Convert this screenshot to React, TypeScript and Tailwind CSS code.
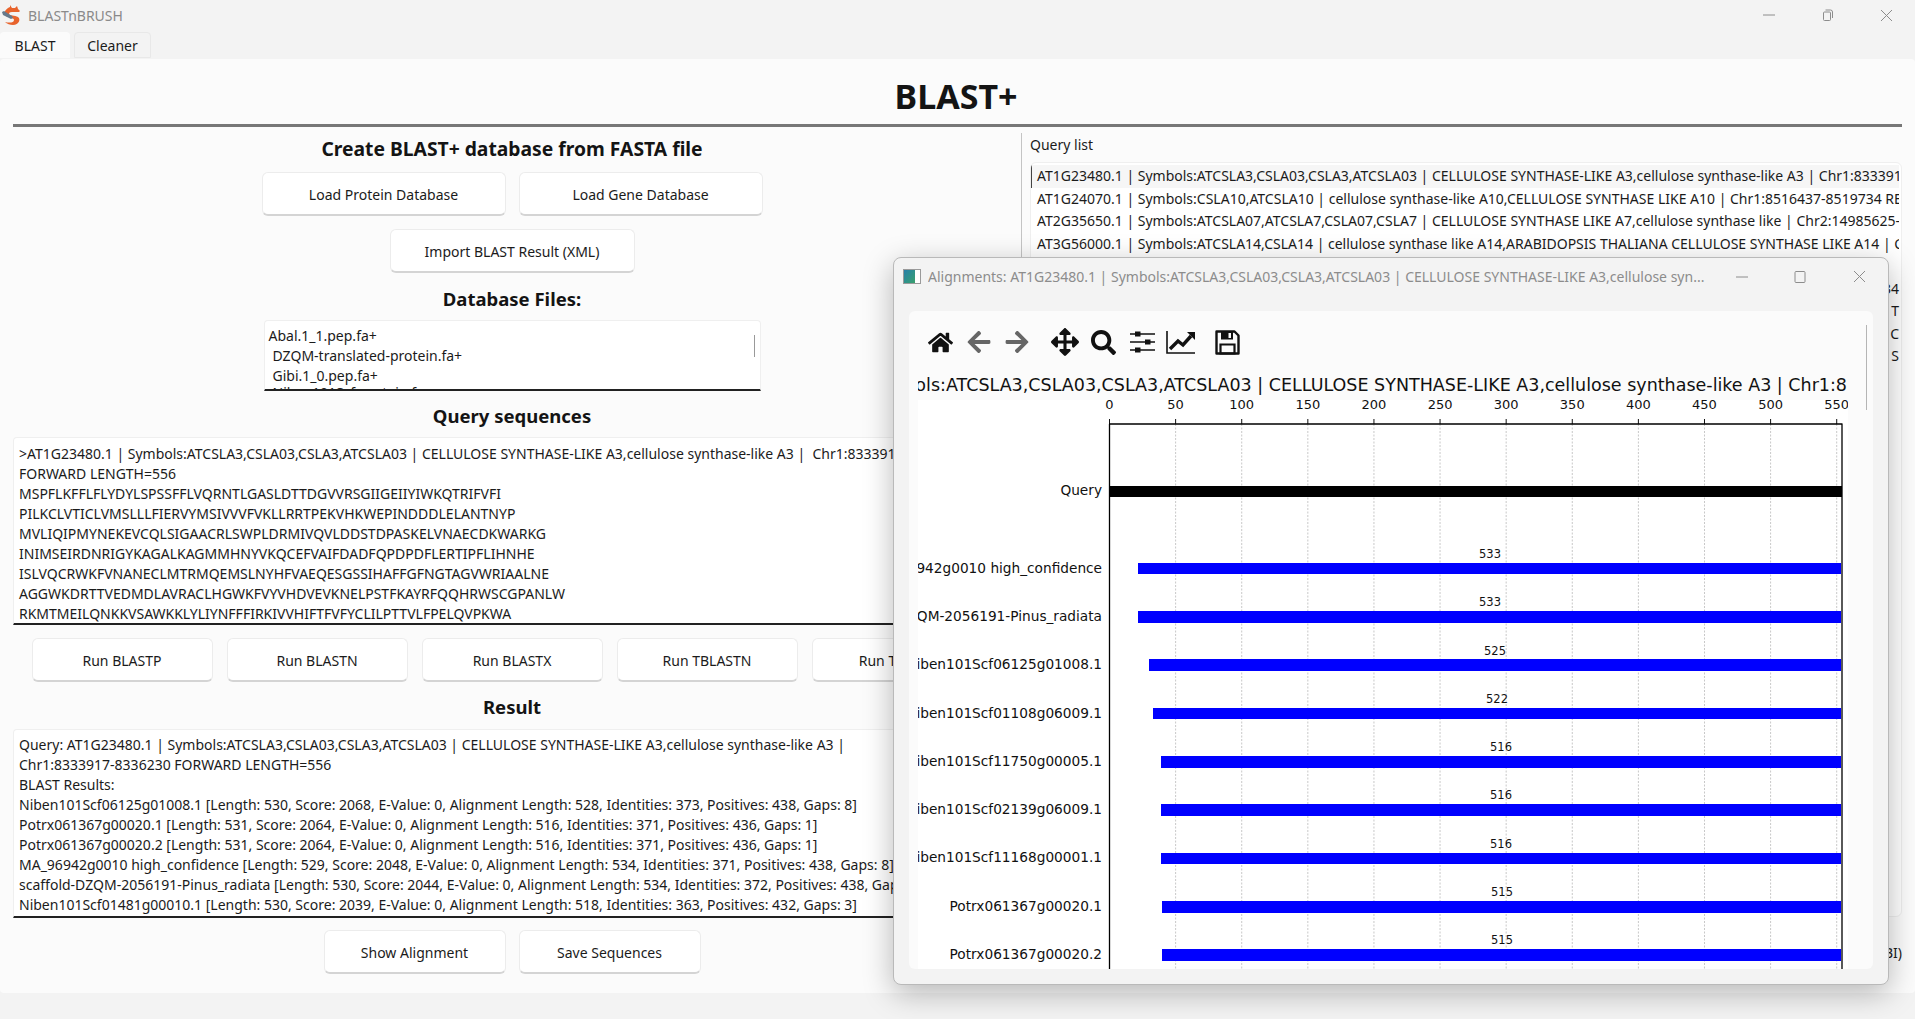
import React from 'react'
import { FaHome, FaArrowLeft, FaArrowRight, FaArrowsAlt, FaSearch } from 'react-icons/fa'

const queryLines = [
  '>AT1G23480.1 | Symbols:ATCSLA3,CSLA03,CSLA3,ATCSLA03 | CELLULOSE SYNTHASE-LIKE A3,cellulose synthase-like A3 |  Chr1:8333917-8336230',
  'FORWARD LENGTH=556',
  'MSPFLKFFLFLYDYLSPSSFFLVQRNTLGASLDTTDGVVRSGIIGEIIYIWKQTRIFVFI',
  'PILKCLVTICLVMSLLLFIERVYMSIVVVFVKLLRRTPEKVHKWEPINDDDLELANTNYP',
  'MVLIQIPMYNEKEVCQLSIGAACRLSWPLDRMIVQVLDDSTDPASKELVNAECDKWARKG',
  'INIMSEIRDNRIGYKAGALKAGMMHNYVKQCEFVAIFDADFQPDPDFLERTIPFLIHNHE',
  'ISLVQCRWKFVNANECLMTRMQEMSLNYHFVAEQESGSSIHAFFGFNGTAGVWRIAALNE',
  'AGGWKDRTTVEDMDLAVRACLHGWKFVYVHDVEVKNELPSTFKAYRFQQHRWSCGPANLW',
  'RKMTMEILQNKKVSAWKKLYLIYNFFFIRKIVVHIFTFVFYCLILPTTVLFPELQVPKWA',
]

const resultLines = [
  'Query: AT1G23480.1 | Symbols:ATCSLA3,CSLA03,CSLA3,ATCSLA03 | CELLULOSE SYNTHASE-LIKE A3,cellulose synthase-like A3 |',
  'Chr1:8333917-8336230 FORWARD LENGTH=556',
  'BLAST Results:',
  'Niben101Scf06125g01008.1 [Length: 530, Score: 2068, E-Value: 0, Alignment Length: 528, Identities: 373, Positives: 438, Gaps: 8]',
  'Potrx061367g00020.1 [Length: 531, Score: 2064, E-Value: 0, Alignment Length: 516, Identities: 371, Positives: 436, Gaps: 1]',
  'Potrx061367g00020.2 [Length: 531, Score: 2064, E-Value: 0, Alignment Length: 516, Identities: 371, Positives: 436, Gaps: 1]',
  'MA_96942g0010 high_confidence [Length: 529, Score: 2048, E-Value: 0, Alignment Length: 534, Identities: 371, Positives: 438, Gaps: 8]',
  'scaffold-DZQM-2056191-Pinus_radiata [Length: 530, Score: 2044, E-Value: 0, Alignment Length: 534, Identities: 372, Positives: 438, Gaps: 8]',
  'Niben101Scf01481g00010.1 [Length: 530, Score: 2039, E-Value: 0, Alignment Length: 518, Identities: 363, Positives: 432, Gaps: 3]',
]

const queryList = [
  'AT1G23480.1 | Symbols:ATCSLA3,CSLA03,CSLA3,ATCSLA03 | CELLULOSE SYNTHASE-LIKE A3,cellulose synthase-like A3 | Chr1:8333917-8336230 FORWARD LENGTH=556',
  'AT1G24070.1 | Symbols:CSLA10,ATCSLA10 | cellulose synthase-like A10,CELLULOSE SYNTHASE LIKE A10 | Chr1:8516437-8519734 REVERSE LENGTH=536',
  'AT2G35650.1 | Symbols:ATCSLA07,ATCSLA7,CSLA07,CSLA7 | CELLULOSE SYNTHASE LIKE A7,cellulose synthase like | Chr2:14985625-14988000 FORWARD',
  'AT3G56000.1 | Symbols:ATCSLA14,CSLA14 | cellulose synthase like A14,ARABIDOPSIS THALIANA CELLULOSE SYNTHASE LIKE A14 | Chr3:20782000',
]

const ticks = [0, 50, 100, 150, 200, 250, 300, 350, 400, 450, 500, 550]
const bars = [
  { label: 'MA_96942g0010 high_confidence', value: 533, x: 1138, y: 563, h: 11, labelY: 568, textX: 1490, textY: 554 },
  { label: 'scaffold-DZQM-2056191-Pinus_radiata', value: 533, x: 1138, y: 611, h: 12, labelY: 616, textX: 1490, textY: 602 },
  { label: 'Niben101Scf06125g01008.1', value: 525, x: 1149, y: 659, h: 12, labelY: 664, textX: 1495, textY: 651 },
  { label: 'Niben101Scf01108g06009.1', value: 522, x: 1153, y: 708, h: 11, labelY: 713, textX: 1497, textY: 699 },
  { label: 'Niben101Scf11750g00005.1', value: 516, x: 1161, y: 756, h: 12, labelY: 761, textX: 1501, textY: 747 },
  { label: 'Niben101Scf02139g06009.1', value: 516, x: 1161, y: 804, h: 12, labelY: 809, textX: 1501, textY: 795 },
  { label: 'Niben101Scf11168g00001.1', value: 516, x: 1161, y: 853, h: 11, labelY: 857, textX: 1501, textY: 844 },
  { label: 'Potrx061367g00020.1', value: 515, x: 1162, y: 901, h: 12, labelY: 906, textX: 1502, textY: 892 },
  { label: 'Potrx061367g00020.2', value: 515, x: 1162, y: 949, h: 12, labelY: 954, textX: 1502, textY: 940 },
]

function Button({ children, className }: { children: React.ReactNode; className?: string }) {
  return (
    <button className={`h-[44px] shrink-0 rounded-md border border-[#ececec] border-b-2 border-b-[#d4d4d4] bg-white pt-[2px] text-[14px] text-[#1b1b1b] ${className ?? ''}`}>
      {children}
    </button>
  )
}

function Heading({ children, className }: { children: React.ReactNode; className?: string }) {
  return <h2 className={`h-[24px] text-center leading-[24px] font-bold text-[#141414] ${className ?? 'text-[18.5px]'}`}>{children}</h2>
}

function Logo() {
  return (
    <svg width="21" height="21" viewBox="0 0 21 21" className="shrink-0">
      <path d="M8 0l2 3 3 0 2-2 1 3 2 2-1 1-5 0c-3 0-5 0-5 2s6 1 9 3 1 8-5 8c-3 0-6-1-8-3 4 1 9 1 9-2s-7-2-9-5 2-7 5-8z" fill="#e8632c" />
      <path d="M0 7l2-1 8 5 1 2-2 1-8-4z" fill="#66788a" />
    </svg>
  )
}

function WindowButtons() {
  return (
    <div className="flex items-center">
      <svg width="12" height="12" viewBox="0 0 12 12" className="mr-[47px]"><path d="M0 6h12" stroke="#8c8c8c" /></svg>
      <svg width="12" height="12" viewBox="0 0 12 12" className="mr-[46px]">
        <rect x="1.5" y="3" width="7" height="8.5" rx="1" fill="none" stroke="#8c8c8c" />
        <path d="M3.5 1h5a2 2 0 0 1 2 2v6" fill="none" stroke="#8c8c8c" />
      </svg>
      <svg width="13" height="13" viewBox="0 0 13 13"><path d="M1 1l11 11M12 1L1 12" stroke="#8c8c8c" /></svg>
    </div>
  )
}

function SlidersIcon() {
  return (
    <svg width="25" height="24" viewBox="0 0 25 24">
      <path d="M0 4h25M0 12h25M0 20h25" stroke="#111" strokeWidth="1.6" />
      <rect x="5" y="1.5" width="5.5" height="5" fill="#111" />
      <rect x="15" y="9.5" width="5.5" height="5" fill="#111" />
      <rect x="5" y="17.5" width="5.5" height="5" fill="#111" />
    </svg>
  )
}

function ChartIcon() {
  return (
    <svg width="30" height="24" viewBox="0 0 30 24">
      <path d="M1 1v22h28" fill="none" stroke="#111" strokeWidth="1.6" />
      <path d="M4 19l8-8 5 4 8-9" fill="none" stroke="#111" strokeWidth="3.4" />
      <path d="M21 2h8v8z" fill="#111" />
    </svg>
  )
}

function SaveIcon() {
  return (
    <svg width="25" height="25" viewBox="0 0 25 25">
      <path d="M1.5 1.5h18l4 4v18h-22z" fill="none" stroke="#111" strokeWidth="2.4" strokeLinejoin="round" />
      <path d="M6 1.5h12v8H6z" fill="#111" />
      <path d="M13.5 3h2.5v5h-2.5z" fill="#fbfbfb" />
      <path d="M5.5 14.5h14v9h-14z" fill="none" stroke="#111" strokeWidth="2.2" />
    </svg>
  )
}

function AlignmentPlot() {
  return (
    <svg width="930" height="598" viewBox="918 371 930 598" className="block shrink-0 bg-white" style={{ fontFamily: '"DejaVu Sans", sans-serif' }}>
      <rect x="918" y="371" width="930" height="29" fill="#fbfbfb" />
      <text x="1847" y="391" textAnchor="end" fontSize="17.5" fill="#111">
        Symbols:ATCSLA3,CSLA03,CSLA3,ATCSLA03 | CELLULOSE SYNTHASE-LIKE A3,cellulose synthase-like A3 | Chr1:8
      </text>
      {ticks.map((t) => {
        const x = 1109.5 + t * 1.3222
        return (
          <g key={t}>
            <path d={`M${x} 424V969`} stroke="#c8c8c8" strokeWidth="1" strokeDasharray="2 1.5" />
            <path d={`M${x} 419V424`} stroke="#111" strokeWidth="1" />
            <text x={x} y="409" textAnchor="middle" fontSize="13" fill="#111">{t}</text>
          </g>
        )
      })}
      <rect x="1109" y="486" width="733" height="11" fill="#000" />
      <text x="1102" y="495" textAnchor="end" fontSize="13.7" fill="#111">Query</text>
      {bars.map((b) => (
        <g key={b.label}>
          <rect x={b.x} y={b.y} width={1841 - b.x} height={b.h} fill="#0000ff" />
          <text x="1102" y={b.labelY + 5} textAnchor="end" fontSize="13.7" fill="#111">{b.label}</text>
          <text x={b.textX} y={b.textY + 4} textAnchor="middle" fontSize="11.5" fill="#111">{b.value}</text>
        </g>
      ))}
      <path d="M1109.5 424V969M1842 424V969M1109 424H1842.5" fill="none" stroke="#000" strokeWidth="1.3" />
    </svg>
  )
}

function AlignmentWindow() {
  return (
    <div className="absolute top-[257px] left-[893px] flex h-[728px] w-[996px] flex-col rounded-lg border border-[#b9b9b9] bg-[#f3f3f3] shadow-[0_8px_30px_rgba(0,0,0,0.28)]">
      <div className="flex h-[53px] shrink-0 items-center pr-[9px] pb-[16px] pl-[9px] text-[14px] text-[#8c8c8c]">
        <div className="mr-[7px] flex h-[15px] w-[18px] shrink-0 border border-[#9a9a9a] bg-white">
          <div className="w-[11px] bg-gradient-to-br from-[#2a7fa8] to-[#3aa06a]" />
        </div>
        <span className="w-[786px] overflow-hidden whitespace-nowrap">
          Alignments: AT1G23480.1 | Symbols:ATCSLA3,CSLA03,CSLA3,ATCSLA03 | CELLULOSE SYNTHASE-LIKE A3,cellulose syn...
        </span>
        <svg width="12" height="12" viewBox="0 0 12 12" className="mr-[46px] ml-[22px] shrink-0"><path d="M0 6h12" stroke="#8c8c8c" /></svg>
        <svg width="12" height="12" viewBox="0 0 12 12" className="mr-[47px] shrink-0"><rect x="1" y="0.5" width="10" height="11" rx="1" fill="none" stroke="#8c8c8c" /></svg>
        <svg width="13" height="13" viewBox="0 0 13 13" className="shrink-0"><path d="M1 1l11 11M12 1L1 12" stroke="#8c8c8c" /></svg>
      </div>
      <div className="mx-[15px] flex h-[658px] flex-col rounded-md bg-[#fbfbfb] pl-[9px]">
        <div className="relative flex h-[60px] shrink-0 items-center pt-[2px] pl-[10px] text-[#111]">
          <FaHome size={25} />
          <FaArrowLeft size={26} className="ml-[13px] text-[#666]" />
          <FaArrowRight size={26} className="ml-[12px] text-[#666]" />
          <FaArrowsAlt size={28} className="ml-[21px]" />
          <FaSearch size={25} className="ml-[12px]" />
          <div className="ml-[14px]"><SlidersIcon /></div>
          <div className="ml-[11px]"><ChartIcon /></div>
          <div className="ml-[19px]"><SaveIcon /></div>
          <div className="absolute top-[14px] left-[948px] h-[85px] w-px bg-[#b5b5b5]" />
        </div>
        <AlignmentPlot />
      </div>
    </div>
  )
}

export default function App() {
  return (
    <div className="relative flex h-[1019px] w-[1915px] flex-col overflow-hidden bg-[#f3f3f3] font-['Noto_Sans','Liberation_Sans',sans-serif] text-[14px] text-[#1b1b1b]">
      {/* title bar */}
      <div className="flex h-[30px] shrink-0 items-center justify-between pr-[22px] pl-[2px]">
        <div className="flex items-center gap-[5px] text-[#8a8a8a]">
          <Logo />
          <span className="text-[14px]">BLASTnBRUSH</span>
        </div>
        <WindowButtons />
      </div>

      {/* tabs */}
      <div className="flex h-[29px] shrink-0 items-end gap-[4px] pb-[1px]">
        <div className="flex h-[26px] w-[70px] items-center justify-center rounded-t bg-[#fbfbfb]">BLAST</div>
        <div className="flex h-[26px] w-[77px] items-center justify-center rounded-t border border-[#e8e8e8] bg-[#f3f3f3]">Cleaner</div>
      </div>

      {/* main panel */}
      <div className="flex h-[934px] shrink-0 flex-col rounded-t rounded-b bg-[#fbfbfb] px-[13px]">
        <h1 className="h-[65px] shrink-0 pt-[15px] pr-[3px] text-center text-[34px] leading-[44px] font-bold text-[#141414]">BLAST+</h1>
        <div className="h-[3px] shrink-0 bg-[#777]" />

        <div className="flex min-h-0 flex-1">
          {/* left column */}
          <div className="flex w-[998px] shrink-0 flex-col items-center pt-[10px]">
            <Heading className="text-[19.3px]">Create BLAST+ database from FASTA file</Heading>
            <div className="mt-[11px] flex gap-[13px]">
              <Button className="w-[244px]">Load Protein Database</Button>
              <Button className="w-[244px]">Load Gene Database</Button>
            </div>
            <Button className="mt-[13px] w-[245px]">Import BLAST Result (XML)</Button>
            <Heading className="mt-[14px] text-[18.5px]">Database Files:</Heading>
            <div className="relative mt-[9px] h-[71px] w-[497px] overflow-hidden rounded-t border border-[#efefef] border-b-2 border-b-[#222] bg-white pt-[5px] pl-[4px] leading-[20px]">
              <div>Abal.1_1.pep.fa+</div>
              <div className="pl-[4px]">DZQM-translated-protein.fa+</div>
              <div className="pl-[4px]">Gibi.1_0.pep.fa+</div>
              <div className="-mt-[3px] pl-[4px]">Niben101Scf-protein.fa+</div>
              <div className="absolute top-[14px] right-[5px] h-[22px] w-px bg-[#999]" />
            </div>
            <Heading className="mt-[13px] text-[18.5px]">Query sequences</Heading>
            <div className="mt-[9px] h-[188px] w-full overflow-hidden rounded-t border border-[#efefef] border-b-2 border-b-[#222] bg-white pt-[6px] pl-[5px] leading-[20px] whitespace-pre">
              {queryLines.map((line) => <div key={line}>{line}</div>)}
            </div>
            <div className="mt-[13px] flex gap-[14px]">
              <Button className="w-[181px]">Run BLASTP</Button>
              <Button className="w-[181px]">Run BLASTN</Button>
              <Button className="w-[181px]">Run BLASTX</Button>
              <Button className="w-[181px]">Run TBLASTN</Button>
              <Button className="w-[181px]">Run TBLASTX</Button>
            </div>
            <Heading className="mt-[13px] text-[18.5px]">Result</Heading>
            <div className="mt-[10px] h-[189px] w-full overflow-hidden rounded-t border border-[#efefef] border-b-2 border-b-[#222] bg-white pt-[5px] pl-[5px] leading-[20px] whitespace-nowrap">
              {resultLines.map((line) => <div key={line}>{line}</div>)}
            </div>
            <div className="mt-[12px] flex gap-[13px]">
              <Button className="w-[182px]">Show Alignment</Button>
              <Button className="w-[182px]">Save Sequences</Button>
            </div>
          </div>

          {/* right column */}
          <div className="mt-[6px] mb-[10px] ml-[10px] flex min-w-0 flex-1 flex-col border-l border-[#c4c4c4] pl-[8px]">
            <div className="h-[29px] shrink-0 pt-[1px] leading-[22px]">Query list</div>
            <div className="flex h-[755px] shrink-0 flex-col overflow-hidden rounded-md border border-[#efefef] bg-white pt-[2px] pr-[2px]">
              {queryList.map((line, i) => (
                <div key={line} className={`h-[22.5px] shrink-0 overflow-hidden pl-[5px] leading-[22px] whitespace-nowrap ${i === 0 ? 'border-l border-[#444] bg-[#f6f6f6]' : 'ml-px'}`}>
                  {line}
                </div>
              ))}
              {['', '34', '1 T', '| C', 'S'].map((tail, i) => (
                <div key={i} className="h-[22.5px] shrink-0 text-right leading-[22px]">{tail}</div>
              ))}
            </div>
            <div className="mt-[25px] text-right leading-[22px]">BI)</div>
          </div>
        </div>
      </div>

      <AlignmentWindow />
    </div>
  )
}
